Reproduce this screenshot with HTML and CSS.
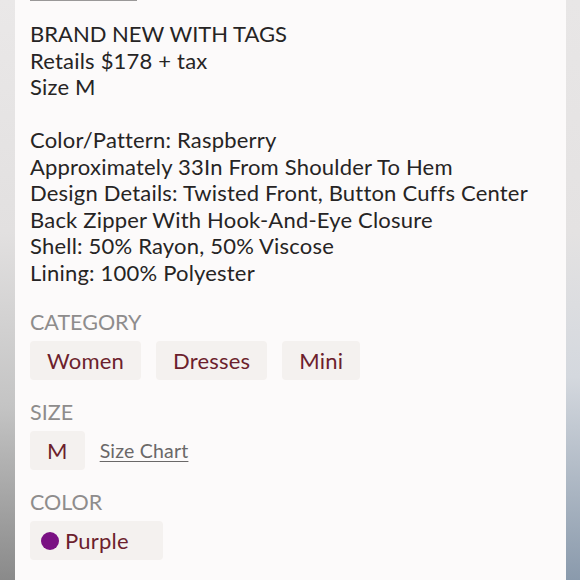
FILE: index.html
```html
<!DOCTYPE html>
<html>
<head>
<meta charset="utf-8">
<link rel="stylesheet" href="styles.css">
</head>
<body>
<div class="page">
  <div class="gutter gutter-left"></div>
  <main class="panel">
    <div class="top-rule"></div>
    <div class="description">
      <p class="caps">BRAND NEW WITH TAGS</p>
      <p>Retails $178 + tax</p>
      <p>Size M</p>
      <p class="blank">&nbsp;</p>
      <p>Color/Pattern: Raspberry</p>
      <p>Approximately 33In From Shoulder To Hem</p>
      <p>Design Details: Twisted Front, Button Cuffs Center</p>
      <p>Back Zipper With Hook-And-Eye Closure</p>
      <p>Shell: 50% Rayon, 50% Viscose</p>
      <p>Lining: 100% Polyester</p>
    </div>
    <section class="attr attr-first">
      <h3 class="attr-label">CATEGORY</h3>
      <div class="chips">
        <span class="chip">Women</span>
        <span class="chip">Dresses</span>
        <span class="chip">Mini</span>
      </div>
    </section>
    <section class="attr">
      <h3 class="attr-label">SIZE</h3>
      <div class="chips">
        <span class="chip">M</span>
        <a class="size-chart" href="#">Size Chart</a>
      </div>
    </section>
    <section class="attr">
      <h3 class="attr-label">COLOR</h3>
      <div class="chips">
        <span class="chip chip-color"><span class="dot"></span>Purple</span>
      </div>
    </section>
  </main>
  <div class="gutter gutter-right"></div>
</div>
</body>
</html>
```

FILE: styles.css
```css
html, body {
  margin: 0;
  padding: 0;
  height: 100%;
}
body {
  font-family: "Lato", "Noto Sans", sans-serif;
  background: #fcfafa;
  overflow: hidden;
}
.page {
  display: flex;
  height: 580px;
}
.gutter {
  flex: 0 0 15px;
}
.gutter-left {
  background: linear-gradient(to bottom, #eae8e8 0%, #e2e0e0 40%, #c4c4c4 70%, #8a8a8a 100%);
}
.gutter-right {
  flex-basis: 14px;
  background: linear-gradient(to bottom, #e8e6e6 0%, #e4e2e2 40%, #d4d8de 65%, #8a9aac 100%);
}
.panel {
  flex: 1;
  background: #fcfafa;
  padding-left: 15px;
}
.top-rule {
  width: 107px;
  height: 1px;
  background: #9a9898;
}
.description {
  margin-top: 20px;
  color: #262424;
  font-size: 22px;
  letter-spacing: 0.2px;
  line-height: 26.5px;
}
.description p {
  margin: 0;
  white-space: nowrap;
}
.description .caps {
  letter-spacing: 0;
}
.attr {
  margin-top: 20px;
}
.attr-first {
  margin-top: 24px;
}
.attr-label {
  margin: 0;
  font-size: 21.5px;
  line-height: 24px;
  font-weight: 400;
  color: #8e8c8c;
}
.chips {
  display: flex;
  align-items: center;
  gap: 15px;
  margin-top: 7px;
}
.chip {
  display: inline-flex;
  align-items: center;
  height: 39px;
  padding: 0 17px;
  background: #f4f1ef;
  border-radius: 4px;
  color: #6c1f2d;
  font-size: 22px;
  letter-spacing: 0.2px;
}
.chip-color {
  padding-left: 11px;
  padding-right: 34px;
}
.dot {
  width: 18px;
  height: 18px;
  border-radius: 50%;
  background: #7a1183;
  margin-right: 6px;
}
.size-chart {
  color: #6a6868;
  font-size: 19.5px;
  letter-spacing: 0.2px;
  text-decoration: underline;
  text-underline-offset: 3px;
}
```
